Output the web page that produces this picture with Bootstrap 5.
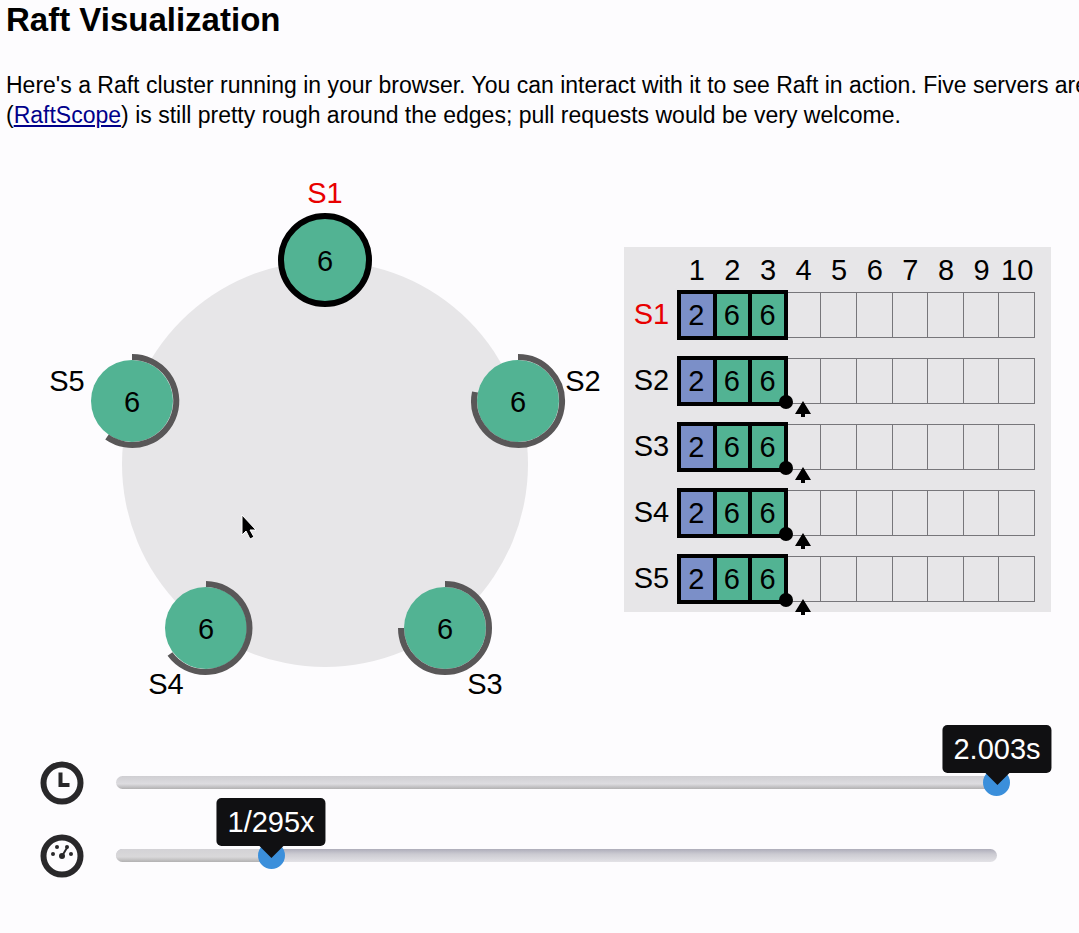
<!DOCTYPE html>
<html lang="en">
<head>
<meta charset="utf-8">
<meta name="viewport" content="width=device-width, initial-scale=1">
<title>Raft Visualization</title>
<link href="https://cdn.jsdelivr.net/npm/bootstrap@5.3.0/dist/css/bootstrap.min.css" rel="stylesheet">
<style>
  body { background: #fdfcfe; color: #000; font-family: "Liberation Sans", Arial, sans-serif; overflow-x: hidden; }
  header { padding: 0 6px; }
  h1 { font-size: 33px; line-height: 40px; margin-bottom: 30px; }
  .intro { font-size: 23px; line-height: 30px; }
  .intro a { color: #00008b; }

  .stage { display: grid; grid-template-columns: 612fr 427fr; column-gap: 12px; padding-right: 28px; margin-top: 40px; }
  .cluster { width: 100%; height: auto; display: block; font-size: 29px; }
  .term { fill: #52b393; }
  .timer { fill: none; stroke: #595758; stroke-width: 6; }
  .leader { fill: #e80000; color: #e80000; }

  .logs { background: #e7e6e8; margin-top: 77px; padding: 0 16px 10px 0; font-size: 29px; line-height: 44px; }
  .logs table { width: 100%; table-layout: fixed; border-collapse: separate; border-spacing: 0; text-align: center; }
  .logs th { font-weight: 400; padding: 0; }
  .logs thead th { height: 44px; padding-top: 1px; }
  .logs thead th:first-child { width: 55px; }
  .logs tbody th, .logs td { padding: 0 0 20px; height: 66px; }
  .logs tbody tr:last-child > * { padding-bottom: 0; height: 46px; }
  .slot { position: relative; height: 46px; border: 1px solid #77767a; border-left-width: 0; }
  .entry { outline: 4px solid #000; outline-offset: -2px; border-color: #000; z-index: 1; }
  .term-2 { background: #7b8fc8; }
  .term-6 { background: #52b393; }
  .match, .next { position: absolute; z-index: 2; }
  .match { width: 14px; height: 14px; border-radius: 50%; background: #000; right: -8px; bottom: -6px; }
  .next { left: 50%; bottom: -14px; transform: translateX(-50%); }

  .controls { padding: 0 82px 0 40px; font-size: 29px; margin-top: 36px; }
  .control { height: 73px; gap: 32px; }
  .control svg { display: block; }
  .track { position: relative; height: 13px; border-radius: 7px; background: linear-gradient(#cfced2, #dddce0 60%, #b2b1b2); }
  .track.partial { background: linear-gradient(#aeadba, #cccbd2 40%, #e3e2e6); }
  .played { position: absolute; inset: 0 auto 0 0; border-radius: 7px; background: linear-gradient(#d3d2d6, #d9d8da 60%, #b2b1b2); }
  .track input { position: absolute; left: -13px; top: -7px; width: calc(100% + 26px); height: 27px; margin: 0; appearance: none; background: transparent; }
  .track input::-webkit-slider-thumb { appearance: none; width: 27px; height: 27px; border-radius: 50%; background: #3b8fdb; }
  .track input::-moz-range-thumb { width: 27px; height: 27px; border: 0; border-radius: 50%; background: #3b8fdb; }
  .tip { position: absolute; bottom: 16px; transform: translateX(-50%); background: #101012; color: #fff; border-radius: 5px; padding: 2px 11px; line-height: 44px; white-space: nowrap; pointer-events: none; }
  .tip::after { content: ""; position: absolute; left: 50%; top: 100%; transform: translateX(-50%); border: solid transparent; border-width: 12px 12px 0; border-top-color: #101012; }
  .pointer-mark { fill: #000; stroke: #fff; stroke-width: 1; }
</style>
</head>
<body>
<main>
  <header class="text-nowrap">
    <h1 class="fw-bold">Raft Visualization</h1>
    <p class="intro mb-0">Here's a Raft cluster running in your browser. You can interact with it to see Raft in action. Five servers are<br>
    (<a href="#">RaftScope</a>) is still pretty rough around the edges; pull requests would be very welcome.</p>
  </header>

  <section class="stage align-items-start">
    <svg class="cluster" viewBox="0 170 612 540" role="img" aria-label="Raft cluster">
      <circle cx="325" cy="464" r="203" fill="#e7e6e8"/>
      <g text-anchor="middle">
        <circle class="term" cx="325" cy="260" r="44" stroke="#000" stroke-width="6"/>
        <text x="325" y="271">6</text>
        <text x="325" y="203" class="leader">S1</text>

        <circle class="term" cx="518" cy="401" r="41"/>
        <path class="timer" d="M518 357a44 44 0 1 1-43 35"/>
        <text x="518" y="412">6</text>
        <text x="583" y="391">S2</text>

        <circle class="term" cx="445" cy="628" r="41"/>
        <path class="timer" d="M445 584a44 44 0 1 1-44 44"/>
        <text x="445" y="639">6</text>
        <text x="485" y="694">S3</text>

        <circle class="term" cx="206" cy="628" r="41"/>
        <path class="timer" d="M206 584a44 44 0 1 1-36 70"/>
        <text x="206" y="639">6</text>
        <text x="166" y="694">S4</text>

        <circle class="term" cx="132" cy="401" r="41"/>
        <path class="timer" d="M132 357a44 44 0 1 1-25 80"/>
        <text x="132" y="412">6</text>
        <text x="67" y="391">S5</text>
      </g>
      <path class="pointer-mark" d="M242 515v20l4-4 4 8 4-2-4-7h6z"/>
    </svg>

    <div class="logs">
      <table>
        <thead><tr><th></th><th scope="col">1</th><th scope="col">2</th><th scope="col">3</th><th scope="col">4</th><th scope="col">5</th><th scope="col">6</th><th scope="col">7</th><th scope="col">8</th><th scope="col">9</th><th scope="col">10</th></tr></thead>
        <tbody id="log-rows"></tbody>
      </table>
    </div>
  </section>

  <section class="controls">
    <div class="control d-flex align-items-center">
      <label for="time"><svg width="44" height="44" viewBox="0 0 44 44" role="img" aria-label="Time"><circle cx="22" cy="22" r="18.500" fill="none" stroke="#29282a" stroke-width="6"/><path d="M20.500 11.500v12.500h9" fill="none" stroke="#29282a" stroke-width="4"/></svg></label>
      <div class="track flex-grow-1">
        <input type="range" id="time" min="0" max="2003" value="2003">
        <output class="tip" for="time" style="left:100%">2.003s</output>
      </div>
    </div>
    <div class="control d-flex align-items-center">
      <label for="speed"><svg width="44" height="44" viewBox="0 0 44 44" role="img" aria-label="Speed"><circle cx="22" cy="22" r="18.500" fill="none" stroke="#29282a" stroke-width="6"/><g fill="#29282a"><circle cx="13" cy="20" r="2"/><circle cx="31" cy="20" r="2"/><circle cx="17" cy="13" r="2"/><circle cx="27" cy="13" r="2"/><circle cx="22" cy="22" r="3"/></g><path d="M22 22l5.500-9" stroke="#29282a" stroke-width="2"/></svg></label>
      <div class="track partial flex-grow-1">
        <div class="played" style="width:17.6%"></div>
        <input type="range" id="speed" min="0" max="1000" value="176">
        <output class="tip" for="speed" style="left:17.6%">1/295x</output>
      </div>
    </div>
  </section>
</main>
<script>
  const terms = [2, 6, 6];
  const slots = 10;
  const nextArrow = '<svg class="next" width="16" height="16" viewBox="0 0 16 16"><path d="M8 0l8 13h-6v3h-4v-3h-6z"/></svg>';
  document.getElementById('log-rows').innerHTML = [1, 2, 3, 4, 5].map(server => {
    let cells = '';
    for (let i = 0; i < slots; i++) {
      const term = terms[i];
      const follower = server > 1;
      const mark = follower && i === terms.length - 1 ? '<span class="match"></span>'
        : follower && i === terms.length ? nextArrow : '';
      cells += `<td><div class="slot ${term ? 'entry term-' + term : ''}">${term || ''}${mark}</div></td>`;
    }
    return `<tr><th scope="row" class="align-top ${server === 1 ? 'leader' : ''}">S${server}</th>${cells}</tr>`;
  }).join('');
</script>
<script src="https://cdn.jsdelivr.net/npm/bootstrap@5.3.0/dist/js/bootstrap.bundle.min.js"></script>
</body>
</html>
